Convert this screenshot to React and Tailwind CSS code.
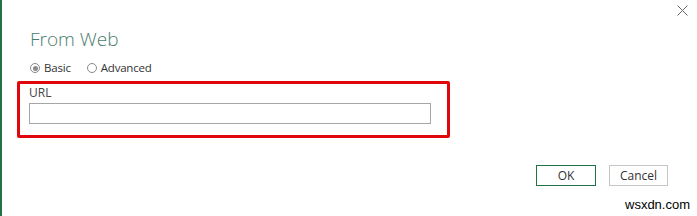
import React from 'react';

export default function App() {
  return (
    <div className="relative w-[697px] h-[216px] bg-white border-l-2 border-[#217346] overflow-hidden font-['Open_Sans',sans-serif] text-[#333]">
      {/* close */}
      <svg className="absolute right-[9px] top-[5px]" width="11" height="11" viewBox="0 0 11 11">
        <path d="M0.5 0.5 L10.5 10.5 M10.5 0.5 L0.5 10.5" stroke="#666" strokeWidth="1" fill="none" />
      </svg>

      <div className="flex flex-col pl-[15px] pt-[26px]">
        <h1 className="pl-[13px] text-[19px] leading-[26px] font-light text-[#4a7d6b]">From Web</h1>

        <div className="flex items-center gap-[16px] pl-[13px] mt-[8px] text-[11.5px] leading-[16px] text-[#333] tracking-[-0.2px]">
          <label className="flex items-center gap-[4px]">
            <span className="w-[10px] h-[10px] rounded-full border border-[#8a8a8a] flex items-center justify-center">
              <span className="w-[5px] h-[5px] rounded-full bg-[#8a8a8a]" />
            </span>
            Basic
          </label>
          <label className="flex items-center gap-[4px]">
            <span className="w-[10px] h-[10px] rounded-full border border-[#8a8a8a]" />
            Advanced
          </label>
        </div>

        <div className="mt-[5px] w-[433px] h-[57px] border-[3px] border-[#e0060c] rounded-[2px] pl-[9px] pt-[1px]">
          <div className="text-[12px] leading-[16px] text-[#444]">URL</div>
          <div className="mt-[2px] w-[402px] h-[21px] border border-[#a6a6a6] bg-white" />
        </div>
      </div>

      <div className="absolute left-[534px] top-[165px] flex gap-[13px] text-[12px]">
        <button className="w-[60px] h-[21px] border border-[#217346] bg-white text-[#333] flex items-center justify-center">OK</button>
        <button className="w-[59px] h-[21px] border border-[#c6c6c6] bg-white text-[#333] flex items-center justify-center">Cancel</button>
      </div>

      <div className="absolute left-[623px] top-[197px] text-[13px] leading-[16px] text-black font-['Liberation_Sans',sans-serif]">wsxdn.com</div>
    </div>
  );
}
